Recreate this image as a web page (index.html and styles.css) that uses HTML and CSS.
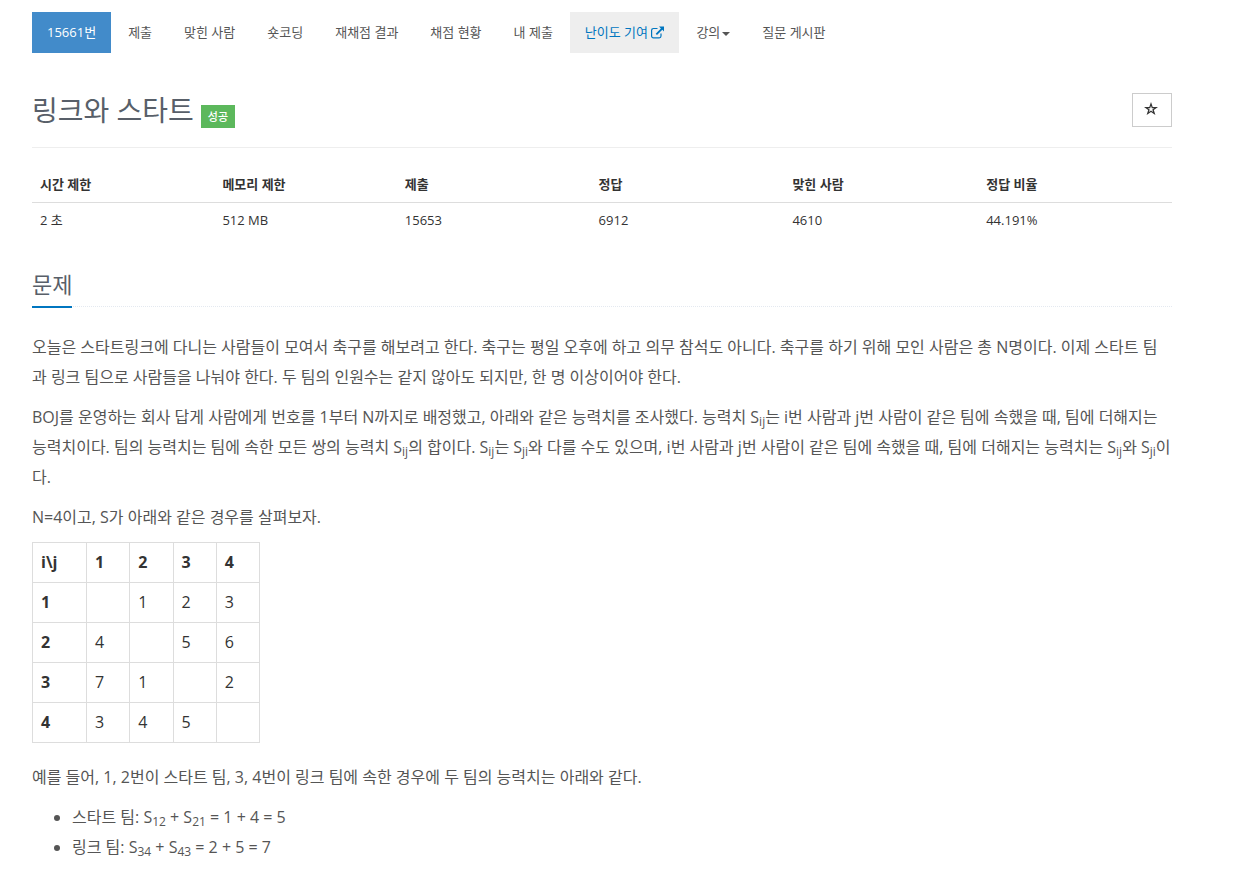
FILE: index.html
```html
<!DOCTYPE html>
<html lang="ko">
<head>
<meta charset="utf-8">
<meta name="viewport" content="width=device-width, initial-scale=1">
<title>15661번: 링크와 스타트</title>
<link rel="stylesheet" href="styles.css">
</head>
<body>
<div class="container">
  <nav class="menu">
    <a class="menu-link active" href="#">15661번</a>
    <a class="menu-link" href="#">제출</a>
    <a class="menu-link" href="#">맞힌 사람</a>
    <a class="menu-link" href="#">숏코딩</a>
    <a class="menu-link" href="#">재채점 결과</a>
    <a class="menu-link" href="#">채점 현황</a>
    <a class="menu-link" href="#">내 제출</a>
    <a class="menu-link highlight" href="#">난이도 기여 <svg class="external" viewBox="0 0 13 13" aria-hidden="true"><path d="M10 7.500v2.500a1.800 1.800 0 0 1-1.800 1.800H2.400A1.800 1.800 0 0 1 .6 10V4.300A1.800 1.800 0 0 1 2.400 2.500H6.500" fill="none" stroke="currentColor" stroke-width="1.200"/><path d="M8 .5H13v5L11.300 3.800 6 9 4.700 7.700 9.900 2.400z" fill="currentColor"/></svg></a>
    <a class="menu-link" href="#">강의<span class="caret"></span></a>
    <a class="menu-link" href="#">질문 게시판</a>
  </nav>
  <header class="page-header">
    <h1 class="title">링크와 스타트</h1>
    <span class="label">성공</span>
    <button class="star" type="button" aria-label="즐겨찾기"><svg class="star-icon" viewBox="0 0 14 14" aria-hidden="true"><path fill-rule="evenodd" d="M7 0l1.700 4.900H14L9.800 8.100 11.400 13 7 10 2.600 13 4.200 8.100 0 4.900h5.300zM7 3.700L6.200 6.200H3.900L5.700 7.600 5 9.900 7 8.500l2 1.400-.7-2.300 1.800-1.400H7.800z" fill="currentColor"/></svg></button>
  </header>
  <table class="info">
    <thead><tr><th class="c16">시간 제한</th><th class="c16">메모리 제한</th><th class="c17">제출</th><th class="c17">정답</th><th class="c17">맞힌 사람</th><th class="c17">정답 비율</th></tr></thead>
    <tbody><tr><td>2 초</td><td>512 MB</td><td>15653</td><td>6912</td><td>4610</td><td>44.191%</td></tr></tbody>
  </table>
  <section>
    <div class="headline"><h2 class="headline-text">문제</h2></div>
    <div class="problem">
      <p>오늘은 스타트링크에 다니는 사람들이 모여서 축구를 해보려고 한다. 축구는 평일 오후에 하고 의무 참석도 아니다. 축구를 하기 위해 모인 사람은 총 N명이다. 이제 스타트 팀과 링크 팀으로 사람들을 나눠야 한다. 두 팀의 인원수는 같지 않아도 되지만, 한 명 이상이어야 한다.</p>
      <p>BOJ를 운영하는 회사 답게 사람에게 번호를 1부터 N까지로 배정했고, 아래와 같은 능력치를 조사했다. 능력치 S<sub>ij</sub>는 i번 사람과 j번 사람이 같은 팀에 속했을 때, 팀에 더해지는 능력치이다. 팀의 능력치는 팀에 속한 모든 쌍의 능력치 S<sub>ij</sub>의 합이다. S<sub>ij</sub>는 S<sub>ji</sub>와 다를 수도 있으며, i번 사람과 j번 사람이 같은 팀에 속했을 때, 팀에 더해지는 능력치는 S<sub>ij</sub>와 S<sub>ji</sub>이다.</p>
      <p>N=4이고, S가 아래와 같은 경우를 살펴보자.</p>
      <table class="matrix">
        <thead><tr><th class="first">i\j</th><th>1</th><th>2</th><th>3</th><th>4</th></tr></thead>
        <tbody>
          <tr><th>1</th><td></td><td>1</td><td>2</td><td>3</td></tr>
          <tr><th>2</th><td>4</td><td></td><td>5</td><td>6</td></tr>
          <tr><th>3</th><td>7</td><td>1</td><td></td><td>2</td></tr>
          <tr><th>4</th><td>3</td><td>4</td><td>5</td><td></td></tr>
        </tbody>
      </table>
      <p>예를 들어, 1, 2번이 스타트 팀, 3, 4번이 링크 팀에 속한 경우에 두 팀의 능력치는 아래와 같다.</p>
      <ul>
        <li>스타트 팀: S<sub>12</sub> + S<sub>21</sub> = 1 + 4 = 5</li>
        <li>링크 팀: S<sub>34</sub> + S<sub>43</sub> = 2 + 5 = 7</li>
      </ul>
    </div>
  </section>
</div>
</body>
</html>
```
FILE: styles.css
```css
* { box-sizing: border-box; }
body {
  margin: 0;
  color: #333;
  background: #fff;
  font: 13px/20px "Open Sans", "Noto Sans CJK KR", sans-serif;
}
.container { max-width: 1170px; margin: 0 auto 0 17px; padding: 12px 15px 0; }
.menu { display: flex; flex-wrap: wrap; gap: 2px; }
.menu-link { padding: 10px 15px 11px; color: #555; font-size: 13px; text-decoration: none; white-space: nowrap; }
.menu-link.active { color: #fff; background: #428bca; }
.menu-link.highlight { color: #0076c0; background: #eee; }
.external { width: 13px; height: 13px; vertical-align: -2px; }
.caret { display: inline-block; margin-left: 2px; border: 4px solid transparent; border-top-color: currentColor; border-bottom: 0; vertical-align: middle; }
.page-header { display: flex; align-items: flex-start; margin-top: 40px; height: 55px; border-bottom: 1px solid #eee; }
.title { margin: 0; color: #585f69; font-size: 28px; font-weight: 400; line-height: 34px; }
.label { margin: 12px 0 0 7px; padding: 0 7px; color: #fff; background: #5cb85c; font-size: 11px; font-weight: 500; line-height: 23px; }
.star { display: flex; align-items: center; justify-content: center; width: 40px; height: 34px; margin-left: auto; padding: 0 2px 2px 0; color: #333; background: #fff; border: 1px solid #ccc; }
.star-icon { width: 14px; height: 14px; }
.info { width: 100%; margin-top: 19px; border-collapse: collapse; table-layout: fixed; text-align: left; }
.info th, .info td { padding: 8px; line-height: 19px; }
.info th { border-bottom: 1px solid #ddd; }
.c16 { width: 16%; }
.c17 { width: 17%; }
.headline { margin: 31px 0 25px; border-bottom: 1px dotted #e4e9f0; }
.headline-text { display: inline-block; margin: 0 0 -2px; padding-bottom: 7px; color: #585f69; border-bottom: 2px solid #0076c0; font-size: 22px; font-weight: 400; line-height: 30px; vertical-align: bottom; }
.problem { color: #555; font-size: 16px; line-height: 30px; }
.problem p { margin: 0 0 10px; word-break: break-all; }
.problem sub { font-size: 75%; line-height: 0; position: relative; bottom: -3px; vertical-align: baseline; }
.matrix { width: 228px; margin: 0 0 19px; color: #333; border-collapse: collapse; text-align: left; line-height: 24px; }
.matrix th, .matrix td { height: 40px; padding: 7px 8px 8px; border: 1px solid #ddd; }
.first { width: 54px; }
.problem ul { margin: 0; padding-left: 40px; }
```
